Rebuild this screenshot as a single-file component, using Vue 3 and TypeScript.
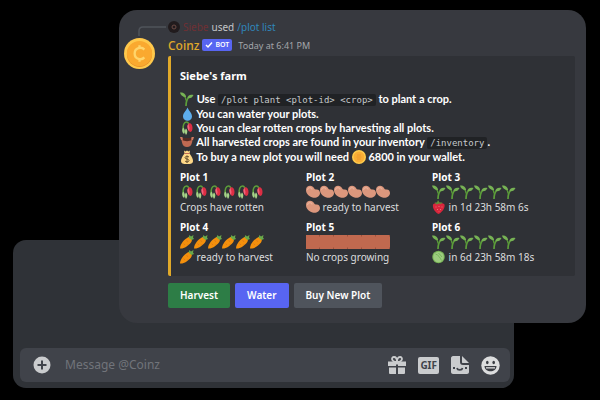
<script setup lang="ts">
import { ref } from 'vue'

interface Plot {
  name: string
  tile: string
  status: string
  crop?: string
}

const plots: Plot[] = [
  { name: 'Plot 1', tile: 'wilted', status: 'Crops have rotten' },
  { name: 'Plot 2', tile: 'beans', crop: 'beans', status: 'ready to harvest' },
  { name: 'Plot 3', tile: 'sprout', crop: 'strawberry', status: 'in 1d 23h 58m 6s' },
  { name: 'Plot 4', tile: 'carrot', crop: 'carrot', status: 'ready to harvest' },
  { name: 'Plot 5', tile: 'soil', status: 'No crops growing' },
  { name: 'Plot 6', tile: 'sprout', crop: 'cabbage', status: 'in 6d 23h 58m 18s' },
]

const draft = ref('')
</script>

<template>
  <svg class="sprite" aria-hidden="true">
    <symbol id="sprout" viewBox="0 0 28 28">
      <path d="M12 28C12 20 13 15 18 10" fill="none" stroke="#5c9e3a" stroke-width="3.400" />
      <path d="M12 17C12 12 9 8 5 6" fill="none" stroke="#5c9e3a" stroke-width="2.600" />
      <path d="M0 1C6 0 12 4 12 10C7 10 2 8 0 1Z" fill="#77b255" />
      <path d="M27 6C20 4 15 7 15 12C20 14 25 11 27 6Z" fill="#77b255" />
    </symbol>
    <symbol id="drop" viewBox="0 0 28 28">
      <path d="M15 1C12 8 6 12 6 19A9 8.500 0 0 0 24 19C24 12 18 8 15 1Z" fill="#5dadec" />
    </symbol>
    <symbol id="wilted" viewBox="0 0 28 28">
      <path d="M7 17C5 9 8 2 13 2C17 2 17 4 18 8" fill="none" stroke="#5c9e3a" stroke-width="3" />
      <path d="M6 13C3 17 4 23 8 26C11 22 10 16 6 13Z" fill="#a6d388" />
      <path d="M12 15C9 18 9 24 12 28C15 24 16 19 12 15Z" fill="#a6d388" />
      <path d="M17 5C21 3 25 7 25 14C25 19 23 22 20 22C17 20 15 16 15 11Z" fill="#dd2e44" />
      <path d="M15 8L17 6L19 14L18 20C16 18 14 13 15 8Z" fill="#f0657b" />
    </symbol>
    <symbol id="pot" viewBox="0 0 28 28">
      <path d="M2 6H26L24 15C23 21 19 24 14 24S5 21 4 15Z" fill="#bf6952" />
      <path d="M5 6H23V10C20 13 8 13 5 10Z" fill="#552a22" />
      <path d="M0 4H5V10H2Z M28 4H23V10H26Z" fill="#d17c64" />
    </symbol>
    <symbol id="moneybag" viewBox="0 0 28 28">
      <path d="M9 7C4 13 2 18 2 22C2 27 6 28 14 28S26 27 26 22C26 18 24 13 19 7Z" fill="#fdd888" />
      <path d="M8 1L11 3L14 1L17 3L20 1L19 7H9Z" fill="#fdd888" />
      <path d="M9 7H19" stroke="#bf6952" stroke-width="2" />
      <path d="M18 14C16 12 10 12 10 15.500C10 19 18 17 18 21C18 25 11 24 10 22M14 11V26" fill="none" stroke="#67512d" stroke-width="2" />
    </symbol>
    <symbol id="coin" viewBox="0 0 28 28">
      <circle cx="14" cy="14" r="14" fill="#ffcc4d" />
      <circle cx="14" cy="14" r="11" fill="#f9ae35" />
      <path d="M10 10H18M9 14H19M10 18H18" stroke="#e8922c" stroke-width="1.600" />
    </symbol>
    <symbol id="beans" viewBox="0 0 28 28">
      <path d="M0 10C0 2 8 0 13 3C17 6 16 9 20 9C25 8 28 12 28 16C28 23 20 27 13 25C5 22 0 17 0 10Z" fill="#dc977d" />
      <path d="M3 9C5 4 10 4 12 8" fill="none" stroke="#e9b099" stroke-width="2.500" stroke-linecap="round" />
    </symbol>
    <symbol id="strawberry" viewBox="0 0 28 28">
      <path d="M2 9C5 4 22 4 25 9C27 17 18 26 13 28C8 26 0 17 2 9Z" fill="#d9263c" />
      <path d="M5 5L10 5L12 0L15 5L21 5L18 8L14 7L9 9Z" fill="#5c913b" />
      <path d="M8 13V15M14 12V14M20 13V15M11 18V20M17 18V20M14 23V24" stroke="#f08a88" stroke-width="1.500" />
    </symbol>
    <symbol id="carrot" viewBox="0 0 28 28">
      <path d="M0 27C0 18 9 8 17 4C23 3 26 9 22 15C16 22 8 28 0 27Z" fill="#f4900c" />
      <path d="M7 17L10 20M13 10L16 14M15 18L17 20" stroke="#d9741a" stroke-width="1.500" />
      <path d="M17 5L19 0L22 3L27 0L26 5L28 8L23 10Z" fill="#69a94a" />
    </symbol>
    <symbol id="soil" viewBox="0 0 28 28">
      <path d="M0 0H28V28H0Z" fill="#c1694f" />
      <path d="M27.500 0V3M27.500 25V28" stroke="#823f2e" stroke-width="1.500" />
    </symbol>
    <symbol id="cabbage" viewBox="0 0 28 28">
      <circle cx="13" cy="14" r="12.500" fill="#77b255" />
      <circle cx="13" cy="14" r="10.500" fill="#9dcc7f" />
      <path d="M7 8C13 10 16 15 19 21M13 6C16 9 18 12 20 14" fill="none" stroke="#6dae51" stroke-width="1.600" />
    </symbol>
  </svg>

  <main class="stage">
    <section class="channel">
      <form class="composer" @submit.prevent>
        <button class="tool" type="button" aria-label="Add attachment">
          <svg width="18" height="18" viewBox="0 0 18 18">
            <circle cx="9" cy="9" r="8.500" fill="#caccce" />
            <path d="M9 4.500V13.500M4.500 9H13.500" stroke="#40444b" stroke-width="2" />
          </svg>
        </button>
        <input v-model="draft" class="draft" type="text" placeholder="Message @Coinz" aria-label="Message @Coinz" />
        <button class="tool" type="button" aria-label="Send a gift">
          <svg width="18" height="20" viewBox="0 0 18 20">
            <path d="M0 6.500H18V11H10V9.500H8V11H0ZM1 12.500H8V19H2Q1 19 1 18ZM10 12.500H17V18Q17 19 16 19H10Z" fill="#caccce" />
            <path d="M9 7C3 7 3 2 6 2C8 2 9 4 9 7C9 4 10 2 12 2C15 2 15 7 9 7Z" fill="none" stroke="#caccce" stroke-width="1.800" />
          </svg>
        </button>
        <button class="tool" type="button" aria-label="Choose a GIF">
          <span class="gif">GIF</span>
        </button>
        <button class="tool" type="button" aria-label="Choose a sticker">
          <svg width="18" height="18" viewBox="0 0 18 18">
            <path d="M2 0H9V6C9 8 10 9 12 9H18V16C18 17 17 18 16 18H2C1 18 0 17 0 16V2C0 1 1 0 2 0Z" fill="#caccce" />
            <path d="M11 0L18 7H12C11 7 11 6.500 11 6Z" fill="#caccce" />
            <path d="M6 12C6.500 14.500 11 14.500 11.500 12" fill="none" stroke="#40444b" stroke-width="1.600" />
            <path d="M2 11H4V13H2ZM14 11H16V13H14Z" fill="#40444b" />
          </svg>
        </button>
        <button class="tool" type="button" aria-label="Choose an emoji">
          <svg width="19" height="19" viewBox="0 0 19 19">
            <circle cx="9.500" cy="9.500" r="9.200" fill="#dcddde" />
            <ellipse cx="6.300" cy="6.500" rx="1.300" ry="1.700" fill="#3a3d43" />
            <ellipse cx="12.700" cy="6.500" rx="1.300" ry="1.700" fill="#3a3d43" />
            <path d="M3.500 10H15.500C15.500 17 3.500 17 3.500 10Z" fill="#3a3d43" />
            <path d="M5 11.200H14V12.500H5Z" fill="#dcddde" />
          </svg>
        </button>
      </form>
    </section>

    <article class="message">
      <svg class="spine" viewBox="0 0 28 10" width="28" height="10" aria-hidden="true">
        <path d="M1 10V5Q1 1 5 1H28" fill="none" stroke="#50545b" stroke-width="1.500" />
      </svg>
      <p class="reply">
        <svg width="12" height="12" viewBox="0 0 12 12" aria-hidden="true">
          <circle cx="6" cy="6" r="6" fill="#211b1d" />
          <circle cx="6" cy="6" r="2" fill="none" stroke="#6b4a44" stroke-width="1" />
        </svg>
        <span class="who">Siebe</span>
        <span>used</span>
        <a class="command" href="#">/plot list</a>
      </p>

      <svg class="avatar" width="31" height="31" viewBox="0 0 32 32" aria-hidden="true">
        <circle cx="16" cy="16" r="16" fill="#ffc94c" />
        <circle cx="16" cy="17" r="13" fill="#e8912a" />
        <circle cx="16" cy="16" r="13" fill="#faa92f" />
        <path d="M21 12C18 8.500 11 10 11 16S18 23.500 21 20M16 7.500V11M16 21V24.500" fill="none" stroke="#ffd56b" stroke-width="2.400" />
      </svg>
      <div class="body">
        <header class="author">
          <span class="name">Coinz</span>
          <span class="badge">
            <svg width="8" height="8" viewBox="0 0 8 8" aria-hidden="true">
              <path d="M1 4L3 6L7 1.500" fill="none" stroke="#fff" stroke-width="1.500" />
            </svg>
            BOT
          </span>
          <time class="time">Today at 6:41 PM</time>
        </header>

        <div class="embed">
          <h1 class="title">Siebe's farm</h1>
          <ul class="hints">
            <li><svg class="emoji"><use href="#sprout" /></svg> Use <code>/plot plant &lt;plot-id&gt; &lt;crop&gt;</code> to plant a crop.</li>
            <li><svg class="emoji"><use href="#drop" /></svg> You can water your plots.</li>
            <li><svg class="emoji"><use href="#wilted" /></svg> You can clear rotten crops by harvesting all plots.</li>
            <li><svg class="emoji"><use href="#pot" /></svg> All harvested crops are found in your inventory <code>/inventory</code>.</li>
            <li><svg class="emoji"><use href="#moneybag" /></svg> To buy a new plot you will need <svg class="emoji"><use href="#coin" /></svg> 6800 in your wallet.</li>
          </ul>
          <div class="plots">
            <section v-for="plot in plots" :key="plot.name" class="plot">
              <h2>{{ plot.name }}</h2>
              <div class="tiles">
                <svg v-for="n in 6" :key="n" class="emoji"><use :href="`#${plot.tile}`" /></svg>
              </div>
              <p class="status">
                <svg v-if="plot.crop" class="emoji"><use :href="`#${plot.crop}`" /></svg>
                {{ plot.status }}
              </p>
            </section>
          </div>
        </div>

        <div class="actions">
          <button class="action green" type="button">Harvest</button>
          <button class="action blurple" type="button">Water</button>
          <button class="action grey" type="button">Buy New Plot</button>
        </div>
      </div>
    </article>
  </main>
</template>

<style>
body {
  background: #000;
}
</style>

<style scoped>
.sprite {
  display: none;
}

.stage {
  display: grid;
  padding: 10px 14px 12px 13px;
  color: #dcddde;
  font: 10px/15px "Noto Sans", "Open Sans", sans-serif;
}

.stage h1,
.stage h2,
.stage p,
.stage ul {
  margin: 0;
  padding: 0;
}

.channel {
  grid-area: 1 / 1;
  align-self: end;
  margin-right: 72px;
  padding: 108px 4px 6px 7px;
  border-radius: 13px;
  background: #2f3237;
}

.composer {
  display: flex;
  align-items: center;
  gap: 12px;
  height: 34px;
  padding: 0 10px 0 13px;
  border-radius: 6px;
  background: #40434a;
}

.tool {
  display: flex;
  flex: none;
  padding: 0;
  border: 0;
  background: none;
}

.draft {
  flex: 1;
  min-width: 0;
  padding: 0 2px;
  border: 0;
  outline: 0;
  background: none;
  color: #dcddde;
  font: 12px/18px "Noto Sans", "Open Sans", sans-serif;
}

.draft::placeholder {
  color: #71747a;
  opacity: 1;
}

.gif {
  padding: 0 2px;
  border-radius: 2px;
  background: #caccce;
  color: #40444b;
  font: 700 10px/17px "Noto Sans", "Open Sans", sans-serif;
}

.message {
  display: grid;
  grid-area: 1 / 1;
  grid-template-columns: 49px 1fr;
  margin: 0 0 65px 106px;
  padding: 8px 11px 15px 0;
  border-radius: 18px;
  background: #37393f;
}

.spine {
  align-self: end;
  justify-self: end;
  margin-right: 2px;
}

.reply {
  display: flex;
  align-items: center;
  gap: 3px;
  height: 18px;
  color: #c3c5c8;
}

.who {
  color: #6f3034;
}

.command {
  color: #2f86bb;
  text-decoration: none;
}

.avatar {
  margin: 2px 0 0 5px;
}

.author {
  display: flex;
  align-items: center;
  height: 18px;
  margin-bottom: 2px;
}

.name {
  color: #e0a92a;
  font-size: 12px;
  font-weight: 500;
}

.badge {
  display: flex;
  align-items: center;
  gap: 2px;
  margin: 0 6px 0 3px;
  padding: 0 3px;
  border-radius: 2px;
  background: #5865f2;
  color: #fff;
  font-size: 7px;
  font-weight: 600;
  line-height: 12px;
}

.time {
  color: #a3a6aa;
  font-size: 9px;
}

.embed {
  padding: 12px 9px 11px;
  border-left: 3px solid #e0a92a;
  border-radius: 2px;
  background: #2f3136;
}

.title {
  color: #fff;
  font-size: 11px;
  font-weight: 700;
  line-height: 16px;
}

.stage .hints {
  margin: 8px 0 6px;
  list-style: none;
  color: #fff;
  font: 700 11px/14px Lato, "Noto Sans", sans-serif;
  white-space: nowrap;
}

.emoji {
  flex: none;
  width: 14px;
  height: 14px;
  vertical-align: top;
}

code {
  padding: 1px 3px;
  border-radius: 2px;
  background: #202225;
  color: #c6c9cc;
  font: 9px/14px "DejaVu Sans Mono", "Liberation Mono", monospace;
}

.plots {
  display: grid;
  grid-template-columns: repeat(3, 126px);
  gap: 5px 0;
}

.plot h2 {
  color: #fff;
  font-size: 10px;
  font-weight: 700;
  line-height: 15px;
}

.tiles {
  display: flex;
  height: 15px;
}

.status {
  height: 15px;
  white-space: nowrap;
}

.actions {
  display: flex;
  gap: 5px;
  margin-top: 7px;
}

.action {
  padding: 0 12px;
  border: 0;
  border-radius: 2px;
  color: #fff;
  font: 600 10px/25px "Noto Sans", "Open Sans", sans-serif;
}

.green {
  background: #2d7d46;
}

.blurple {
  background: #5865f2;
}

.grey {
  background: #4f545c;
}
</style>
